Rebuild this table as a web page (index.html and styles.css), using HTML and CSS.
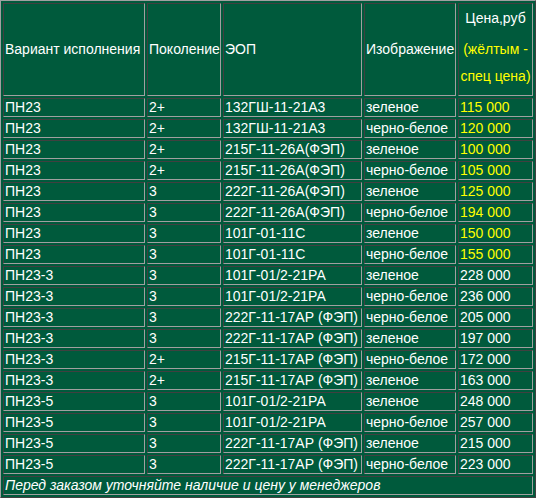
FILE: index.html
```html
<!DOCTYPE html>
<html>
<head>
<meta charset="utf-8">
<link rel="stylesheet" href="styles.css">
</head>
<body>
<table class="price">
<tr class="head">
<th class="c1">Вариант исполнения</th>
<th class="c2">Поколение</th>
<th class="c3">ЭОП</th>
<th class="c4">Изображение</th>
<th class="c5"><div class="ph1">Цена,руб</div><div class="ph2">(жёлтым -<br>спец цена)</div></th>
</tr>
<tr><td>ПН23</td><td>2+</td><td>132ГШ-11-21А3</td><td>зеленое</td><td class="y">115 000</td></tr>
<tr><td>ПН23</td><td>2+</td><td>132ГШ-11-21А3</td><td>черно-белое</td><td class="y">120 000</td></tr>
<tr><td>ПН23</td><td>2+</td><td>215Г-11-26А(ФЭП)</td><td>зеленое</td><td class="y">100 000</td></tr>
<tr><td>ПН23</td><td>2+</td><td>215Г-11-26А(ФЭП)</td><td>черно-белое</td><td class="y">105 000</td></tr>
<tr><td>ПН23</td><td>3</td><td>222Г-11-26А(ФЭП)</td><td>зеленое</td><td class="y">125 000</td></tr>
<tr><td>ПН23</td><td>3</td><td>222Г-11-26А(ФЭП)</td><td>черно-белое</td><td class="y">194 000</td></tr>
<tr><td>ПН23</td><td>3</td><td>101Г-01-11С</td><td>зеленое</td><td class="y">150 000</td></tr>
<tr><td>ПН23</td><td>3</td><td>101Г-01-11С</td><td>черно-белое</td><td class="y">155 000</td></tr>
<tr><td>ПН23-3</td><td>3</td><td>101Г-01/2-21РА</td><td>зеленое</td><td>228 000</td></tr>
<tr><td>ПН23-3</td><td>3</td><td>101Г-01/2-21РА</td><td>черно-белое</td><td>236 000</td></tr>
<tr><td>ПН23-3</td><td>3</td><td>222Г-11-17АР (ФЭП)</td><td>черно-белое</td><td>205 000</td></tr>
<tr><td>ПН23-3</td><td>3</td><td>222Г-11-17АР (ФЭП)</td><td>зеленое</td><td>197 000</td></tr>
<tr><td>ПН23-3</td><td>2+</td><td>215Г-11-17АР (ФЭП)</td><td>черно-белое</td><td>172 000</td></tr>
<tr><td>ПН23-3</td><td>2+</td><td>215Г-11-17АР (ФЭП)</td><td>зеленое</td><td>163 000</td></tr>
<tr><td>ПН23-5</td><td>3</td><td>101Г-01/2-21РА</td><td>зеленое</td><td>248 000</td></tr>
<tr><td>ПН23-5</td><td>3</td><td>101Г-01/2-21РА</td><td>черно-белое</td><td>257 000</td></tr>
<tr><td>ПН23-5</td><td>3</td><td>222Г-11-17АР (ФЭП)</td><td>зеленое</td><td>215 000</td></tr>
<tr><td>ПН23-5</td><td>3</td><td>222Г-11-17АР (ФЭП)</td><td>черно-белое</td><td>223 000</td></tr>
<tr><td class="note" colspan="5">Перед заказом уточняйте наличие и цену у менеджеров</td></tr>
</table>
</body>
</html>
```
FILE: styles.css
```css
html, body {
  margin: 0;
  padding: 0;
  background: #ffffff;
}
.price {
  width: 536px;
  table-layout: fixed;
  border-collapse: separate;
  border-spacing: 2px;
  border: 1px solid;
  border-color: #a0a0a0 #404040 #404040 #a0a0a0;
  background: #005a3c;
  font-family: "Liberation Sans", Arial, sans-serif;
  font-size: 14px;
  color: #ffffff;
}
.price th, .price td {
  box-sizing: border-box;
  border: 1px solid;
  border-color: #404040 #a0a0a0 #a0a0a0 #404040;
  padding: 1px;
  line-height: 15px;
  text-align: left;
  font-weight: normal;
  vertical-align: middle;
  white-space: nowrap;
}
.head th {
  height: 93px;
}
.c1 { width: 142px; }
.c2 { width: 74px; }
.c3 { width: 139px; }
.c4 { width: 92px; }
.c5 { width: 75px; }
.price th.c5 {
  text-align: center;
}
.ph1 {
  line-height: 18px;
}
.ph2 {
  color: #ffff00;
  line-height: 27px;
  margin-top: 9px;
}
.y {
  color: #ffff00;
}
.price td.note {
  font-style: italic;
}
```
